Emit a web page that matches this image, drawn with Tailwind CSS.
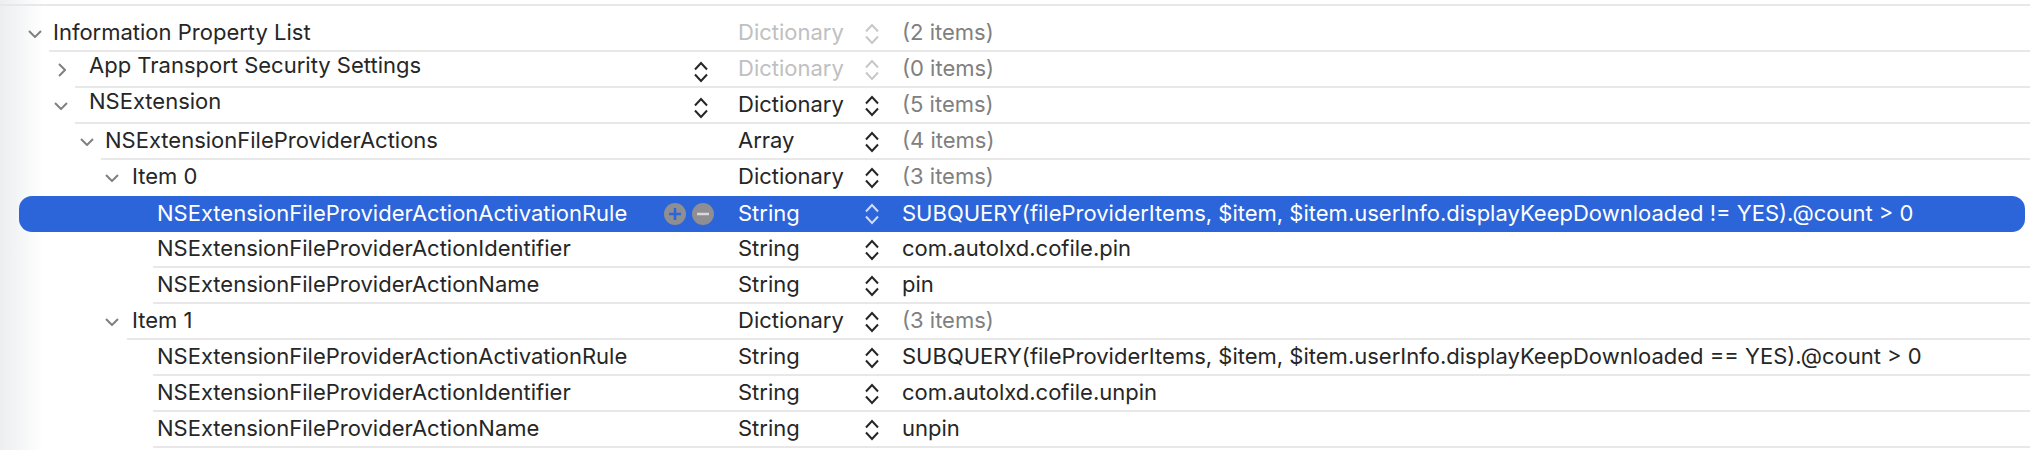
<!doctype html>
<html lang="en">
  <head>
    <meta charset="UTF-8" />
    <title>Info.plist</title>
    <script src="https://cdn.jsdelivr.net/npm/@tailwindcss/browser@4"></script>
  </head>
  <body class="bg-white">
    <div class="w-[2030px] h-[450px] overflow-hidden pt-1 bg-[linear-gradient(to_right,#eceef0,#ffffff_44px)] font-['Inter',sans-serif] text-[22px] text-[#262626]">
      <div class="h-0.5 bg-[#e8e8e8] mb-[10px]"></div>

      <!-- Information Property List -->
      <div class="flex h-9">
        <div class="w-[49px] flex justify-end items-center pr-[7px]"><svg class="w-[14px] h-2" viewBox="0 0 14 8" fill="none" stroke="#808080" stroke-width="2"><path d="M1 1l6 6 6-6" /></svg></div>
        <div class="flex-1 flex items-center pb-0.5 border-b-2 border-[#e8e8e8]">
          <div class="w-[689px] pl-1">Information Property List</div>
          <div class="w-[164px] pr-[22px] flex items-center justify-between text-[#c0c0c0]">Dictionary<svg class="w-4 h-[22px] mt-1" viewBox="0 0 16 22" fill="none" stroke="#c8c8c8" stroke-width="2"><path d="M2 8.5l6-6.5 6 6.5M2 13.500l6 6.500 6-6.500" /></svg></div>
          <div class="text-[#808080]">(2 items)</div>
        </div>
      </div>

      <!-- App Transport Security Settings -->
      <div class="flex h-9">
        <div class="w-[75px] flex justify-end items-center pr-[6px]"><svg class="w-2 h-[14px] mr-[3px]" viewBox="0 0 8 14" fill="none" stroke="#808080" stroke-width="2"><path d="M1 1l6 6-6 6" /></svg></div>
        <div class="flex-1 flex items-center pb-0.5 border-b-2 border-[#e8e8e8]">
          <div class="w-[663px] pl-[14px] pr-[29px] flex items-center justify-between"><span class="-mt-[6px]">App Transport Security Settings</span><svg class="w-4 h-[22px] mt-2" viewBox="0 0 16 22" fill="none" stroke="#262626" stroke-width="2"><path d="M2 8.5l6-6.5 6 6.5M2 13.500l6 6.500 6-6.500" /></svg></div>
          <div class="w-[164px] pr-[22px] flex items-center justify-between text-[#c0c0c0]">Dictionary<svg class="w-4 h-[22px] mt-1" viewBox="0 0 16 22" fill="none" stroke="#c8c8c8" stroke-width="2"><path d="M2 8.5l6-6.5 6 6.5M2 13.500l6 6.500 6-6.500" /></svg></div>
          <div class="text-[#808080]">(0 items)</div>
        </div>
      </div>

      <!-- NSExtension -->
      <div class="flex h-9">
        <div class="w-[75px] flex justify-end items-center pr-[7px]"><svg class="w-[14px] h-2" viewBox="0 0 14 8" fill="none" stroke="#808080" stroke-width="2"><path d="M1 1l6 6 6-6" /></svg></div>
        <div class="flex-1 flex items-center pb-0.5 border-b-2 border-[#e8e8e8]">
          <div class="w-[663px] pl-[14px] pr-[29px] flex items-center justify-between"><span class="-mt-[6px]">NSExtension</span><svg class="w-4 h-[22px] mt-2" viewBox="0 0 16 22" fill="none" stroke="#262626" stroke-width="2"><path d="M2 8.5l6-6.5 6 6.5M2 13.500l6 6.500 6-6.500" /></svg></div>
          <div class="w-[164px] pr-[22px] flex items-center justify-between">Dictionary<svg class="w-4 h-[22px] mt-1" viewBox="0 0 16 22" fill="none" stroke="#262626" stroke-width="2"><path d="M2 8.5l6-6.5 6 6.5M2 13.500l6 6.500 6-6.500" /></svg></div>
          <div class="text-[#808080]">(5 items)</div>
        </div>
      </div>

      <!-- NSExtensionFileProviderActions -->
      <div class="flex h-9">
        <div class="w-[101px] flex justify-end items-center pr-[7px]"><svg class="w-[14px] h-2" viewBox="0 0 14 8" fill="none" stroke="#808080" stroke-width="2"><path d="M1 1l6 6 6-6" /></svg></div>
        <div class="flex-1 flex items-center pb-0.5 border-b-2 border-[#e8e8e8]">
          <div class="w-[637px] pl-1">NSExtensionFileProviderActions</div>
          <div class="w-[164px] pr-[22px] flex items-center justify-between">Array<svg class="w-4 h-[22px] mt-1" viewBox="0 0 16 22" fill="none" stroke="#262626" stroke-width="2"><path d="M2 8.5l6-6.5 6 6.5M2 13.500l6 6.500 6-6.500" /></svg></div>
          <div class="text-[#808080]">(4 items)</div>
        </div>
      </div>

      <!-- Item 0 -->
      <div class="flex h-9">
        <div class="w-[127px] flex justify-end items-center pr-2"><svg class="w-[14px] h-2" viewBox="0 0 14 8" fill="none" stroke="#808080" stroke-width="2"><path d="M1 1l6 6 6-6" /></svg></div>
        <div class="flex-1 flex items-center pb-0.5 border-b-2 border-transparent">
          <div class="w-[611px] pl-[5px]">Item 0</div>
          <div class="w-[164px] pr-[22px] flex items-center justify-between">Dictionary<svg class="w-4 h-[22px] mt-1" viewBox="0 0 16 22" fill="none" stroke="#262626" stroke-width="2"><path d="M2 8.5l6-6.5 6 6.5M2 13.500l6 6.500 6-6.500" /></svg></div>
          <div class="text-[#808080]">(3 items)</div>
        </div>
      </div>

      <!-- selected row -->
      <div class="flex h-9 ml-[19px] mr-[5px] rounded-[13px] bg-[#2c64d9] text-white">
        <div class="w-[134px]"></div>
        <div class="flex-1 flex items-center pb-0.5">
          <div class="w-[585px] pl-1 pr-[24px] flex items-center justify-between">
            <span>NSExtensionFileProviderActionActivationRule</span>
            <div class="flex gap-[6px] mt-0.5">
              <svg class="w-[22px] h-[22px]" viewBox="0 0 22 22"><circle cx="11" cy="11" r="11" fill="#8e8e93" /><path d="M11 5v12M5 11h12" stroke="#2c64d9" stroke-width="2.5" /></svg>
              <svg class="w-[22px] h-[22px]" viewBox="0 0 22 22"><circle cx="11" cy="11" r="11" fill="#8e8e93" /><path d="M5 11h12" stroke="#d8d8d8" stroke-width="2.5" /></svg>
            </div>
          </div>
          <div class="w-[164px] pr-[22px] flex items-center justify-between">String<svg class="w-4 h-[22px] mt-0.5" viewBox="0 0 16 22" fill="none" stroke="#cfdcf7" stroke-width="2"><path d="M2 8.5l6-6.5 6 6.5M2 13.500l6 6.500 6-6.500" /></svg></div>
          <div>SUBQUERY(fileProviderItems, $item, $item.userInfo.displayKeepDownloaded != YES).@count &gt; 0</div>
        </div>
      </div>

      <!-- Item 0 leaves -->
      <div class="flex h-9">
        <div class="w-[153px]"></div>
        <div class="flex-1 flex items-center pb-0.5 border-b-2 border-[#e8e8e8]">
          <div class="w-[585px] pl-1">NSExtensionFileProviderActionIdentifier</div>
          <div class="w-[164px] pr-[22px] flex items-center justify-between">String<svg class="w-4 h-[22px] mt-1" viewBox="0 0 16 22" fill="none" stroke="#262626" stroke-width="2"><path d="M2 8.5l6-6.5 6 6.5M2 13.500l6 6.500 6-6.500" /></svg></div>
          <div>com.autolxd.cofile.pin</div>
        </div>
      </div>
      <div class="flex h-9">
        <div class="w-[153px]"></div>
        <div class="flex-1 flex items-center pb-0.5 border-b-2 border-[#e8e8e8]">
          <div class="w-[585px] pl-1">NSExtensionFileProviderActionName</div>
          <div class="w-[164px] pr-[22px] flex items-center justify-between">String<svg class="w-4 h-[22px] mt-1" viewBox="0 0 16 22" fill="none" stroke="#262626" stroke-width="2"><path d="M2 8.5l6-6.5 6 6.5M2 13.500l6 6.500 6-6.500" /></svg></div>
          <div>pin</div>
        </div>
      </div>

      <!-- Item 1 -->
      <div class="flex h-9">
        <div class="w-[127px] flex justify-end items-center pr-2"><svg class="w-[14px] h-2" viewBox="0 0 14 8" fill="none" stroke="#808080" stroke-width="2"><path d="M1 1l6 6 6-6" /></svg></div>
        <div class="flex-1 flex items-center pb-0.5 border-b-2 border-[#e8e8e8]">
          <div class="w-[611px] pl-[5px]">Item 1</div>
          <div class="w-[164px] pr-[22px] flex items-center justify-between">Dictionary<svg class="w-4 h-[22px] mt-1" viewBox="0 0 16 22" fill="none" stroke="#262626" stroke-width="2"><path d="M2 8.5l6-6.5 6 6.5M2 13.500l6 6.500 6-6.500" /></svg></div>
          <div class="text-[#808080]">(3 items)</div>
        </div>
      </div>

      <!-- Item 1 leaves -->
      <div class="flex h-9">
        <div class="w-[153px]"></div>
        <div class="flex-1 flex items-center pb-0.5 border-b-2 border-[#e8e8e8]">
          <div class="w-[585px] pl-1">NSExtensionFileProviderActionActivationRule</div>
          <div class="w-[164px] pr-[22px] flex items-center justify-between">String<svg class="w-4 h-[22px] mt-1" viewBox="0 0 16 22" fill="none" stroke="#262626" stroke-width="2"><path d="M2 8.5l6-6.5 6 6.5M2 13.500l6 6.500 6-6.500" /></svg></div>
          <div>SUBQUERY(fileProviderItems, $item, $item.userInfo.displayKeepDownloaded == YES).@count &gt; 0</div>
        </div>
      </div>
      <div class="flex h-9">
        <div class="w-[153px]"></div>
        <div class="flex-1 flex items-center pb-0.5 border-b-2 border-[#e8e8e8]">
          <div class="w-[585px] pl-1">NSExtensionFileProviderActionIdentifier</div>
          <div class="w-[164px] pr-[22px] flex items-center justify-between">String<svg class="w-4 h-[22px] mt-1" viewBox="0 0 16 22" fill="none" stroke="#262626" stroke-width="2"><path d="M2 8.5l6-6.5 6 6.5M2 13.500l6 6.500 6-6.500" /></svg></div>
          <div>com.autolxd.cofile.unpin</div>
        </div>
      </div>
      <div class="flex h-9">
        <div class="w-[153px]"></div>
        <div class="flex-1 flex items-center pb-0.5 border-b-2 border-[#e8e8e8]">
          <div class="w-[585px] pl-1">NSExtensionFileProviderActionName</div>
          <div class="w-[164px] pr-[22px] flex items-center justify-between">String<svg class="w-4 h-[22px] mt-1" viewBox="0 0 16 22" fill="none" stroke="#262626" stroke-width="2"><path d="M2 8.5l6-6.5 6 6.5M2 13.500l6 6.500 6-6.500" /></svg></div>
          <div>unpin</div>
        </div>
      </div>
    </div>
  </body>
</html>
